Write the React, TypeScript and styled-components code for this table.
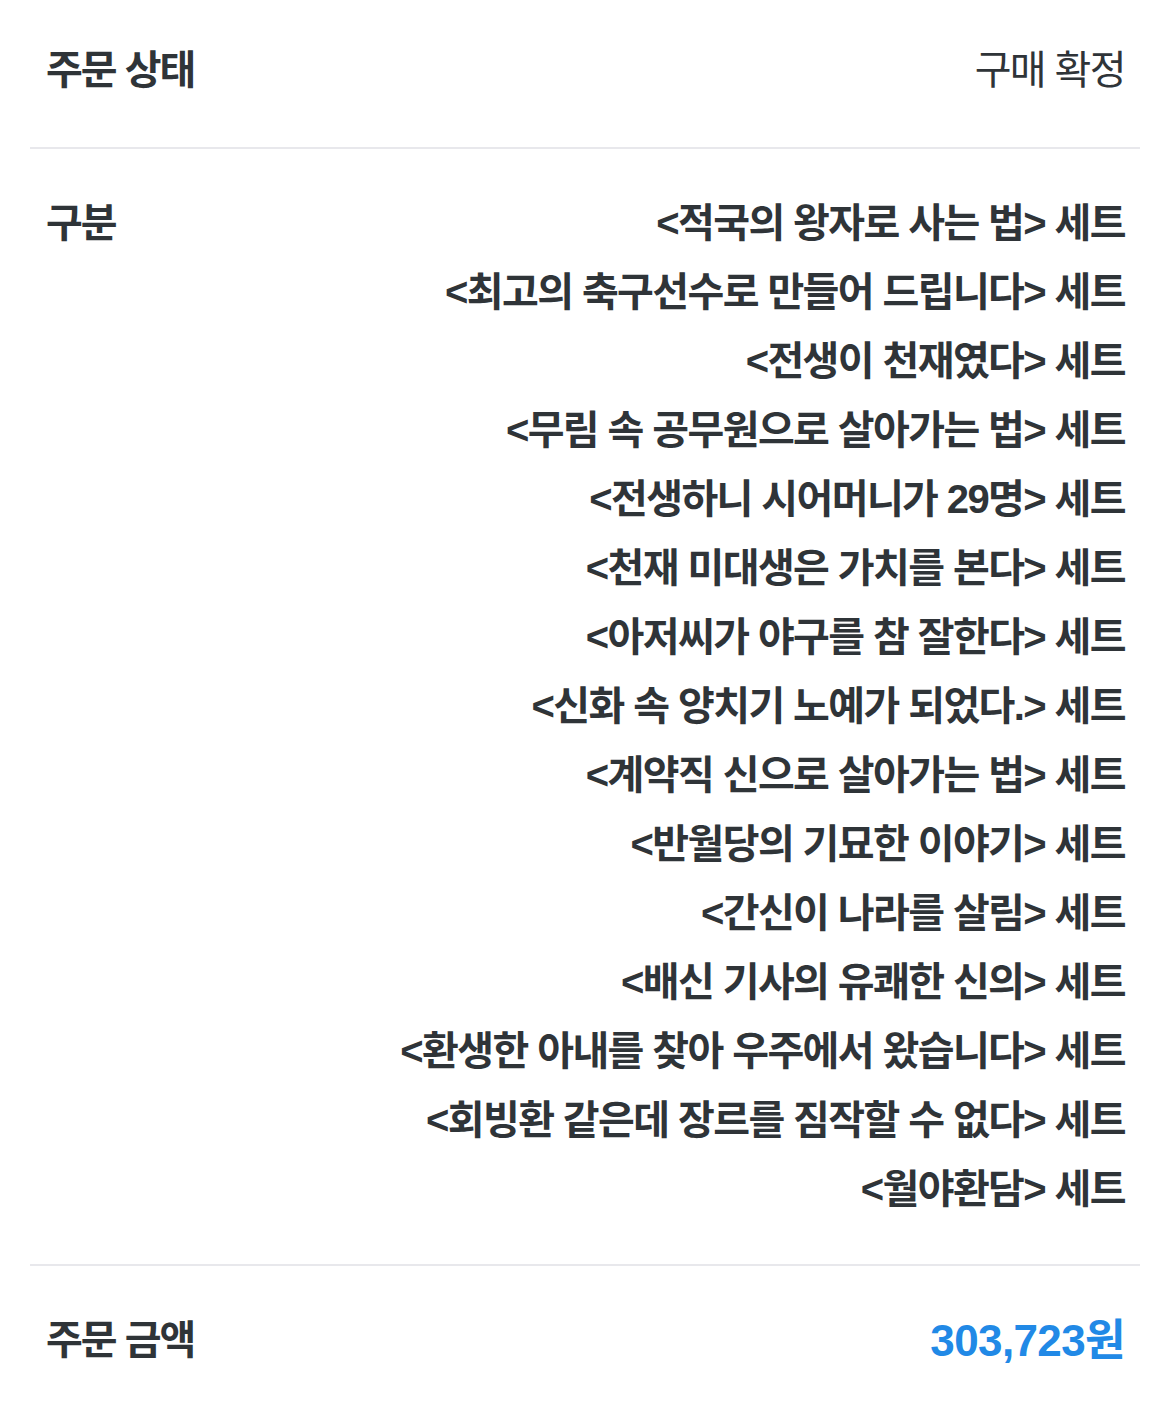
import React from "react";
import styled, { createGlobalStyle } from "styled-components";

const GlobalStyle = createGlobalStyle`
  body {
    margin: 0;
    background: #ffffff;
    font-family: "Liberation Sans", "Noto Sans CJK KR", sans-serif;
  }
`;

const Wrapper = styled.div`
  padding: 0 30px;
  width: 1170px;
  box-sizing: border-box;
`;

const Section = styled.section<{ $top: number; $bottom: number; $last?: boolean }>`
  display: flex;
  justify-content: space-between;
  align-items: flex-start;
  padding: ${(p) => p.$top}px 15px ${(p) => p.$bottom}px 16px;
  border-bottom: ${(p) => (p.$last ? "none" : "2px solid #e8e8ec")};
`;

const Label = styled.div`
  font-size: 40px;
  line-height: 69px;
  font-weight: bold;
  color: #2f3438;
  letter-spacing: -2px;
  white-space: nowrap;
`;

const Value = styled.div<{ $bold?: boolean }>`
  font-size: 40px;
  line-height: 69px;
  font-weight: ${(p) => (p.$bold ? "bold" : "normal")};
  color: #2f3438;
  letter-spacing: -1.6px;
  text-align: right;
  white-space: nowrap;
`;

const Amount = styled.div`
  font-size: 44px;
  line-height: 69px;
  font-weight: bold;
  color: #2189e6;
  letter-spacing: -0.6px;
  white-space: nowrap;
`;

const List = styled.div`
  display: flex;
  flex-direction: column;
  align-items: flex-end;
`;

const titles = [
  "적국의 왕자로 사는 법",
  "최고의 축구선수로 만들어 드립니다",
  "전생이 천재였다",
  "무림 속 공무원으로 살아가는 법",
  "전생하니 시어머니가 29명",
  "천재 미대생은 가치를 본다",
  "아저씨가 야구를 참 잘한다",
  "신화 속 양치기 노예가 되었다.",
  "계약직 신으로 살아가는 법",
  "반월당의 기묘한 이야기",
  "간신이 나라를 살림",
  "배신 기사의 유쾌한 신의",
  "환생한 아내를 찾아 우주에서 왔습니다",
  "회빙환 같은데 장르를 짐작할 수 없다",
  "월야환담",
];

const App: React.FC = () => {
  return (
    <>
      <GlobalStyle />
      <Wrapper>
        <Section $top={36} $bottom={42}>
          <Label>주문 상태</Label>
          <Value>구매 확정</Value>
        </Section>
        <Section $top={40} $bottom={40}>
          <Label>구분</Label>
          <List>
            {titles.map((t) => (
              <Value key={t} $bold>
                {`<${t}> 세트`}
              </Value>
            ))}
          </List>
        </Section>
        <Section $top={40} $bottom={40} $last>
          <Label>주문 금액</Label>
          <Amount>303,723원</Amount>
        </Section>
      </Wrapper>
    </>
  );
};

export default App;
